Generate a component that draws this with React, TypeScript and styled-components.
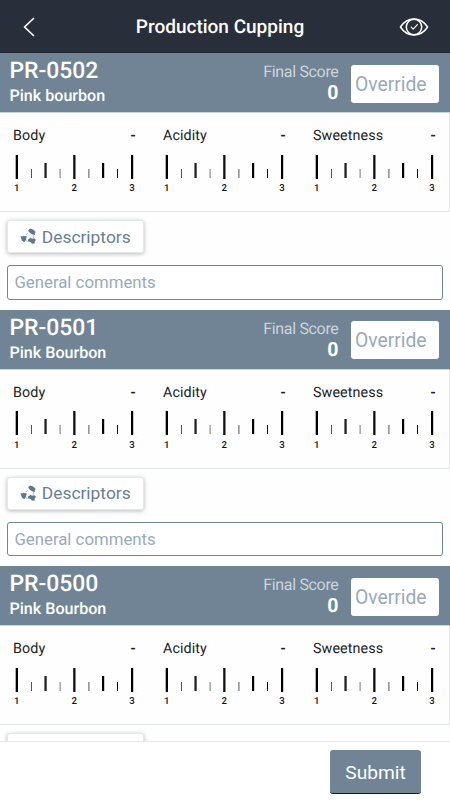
import React from 'react';
import styled, { createGlobalStyle } from 'styled-components';

const GlobalStyle = createGlobalStyle`
  * { box-sizing: border-box; }
  body { margin: 0; background: #fefefe; font-family: Roboto, "Liberation Sans", sans-serif; overflow: hidden; }
  button, input { font-family: inherit; margin: 0; outline: none; }
`;

const Screen = styled.div`
  display: flex;
  flex-direction: column;
  width: 450px;
  height: 800px;
  overflow: hidden;
  text-rendering: geometricPrecision;
`;

const TopBar = styled.header`
  flex: none;
  height: 53px;
  padding: 0 21px 0 23px;
  display: grid;
  grid-template-columns: 18px 1fr 30px;
  align-items: center;
  background: #292e3b;
  border-bottom: 1px solid #202531;
`;

const Title = styled.h1`
  margin: 1px 0 0;
  font-size: 19px;
  line-height: 24px;
  font-weight: 500;
  color: #fff;
  text-align: center;
  white-space: nowrap;
`;

const IconButton = styled.button`
  display: flex;
  margin-top: 1px;
  padding: 0;
  border: 0;
  background: none;
`;

const List = styled.main`
  flex: 1;
  min-height: 0;
  overflow: hidden;
`;

const Sample = styled.section`
  height: 256.6px;
`;

const SampleHeader = styled.div`
  height: 60px;
  display: flex;
  align-items: flex-start;
  padding: 0 11px 0 9.5px;
  background: #708495;
  border-bottom: 1px solid #c9d3da;
  color: #fff;
`;

const Identity = styled.div`
  flex: 1;
  padding-top: 4px;
`;

const Code = styled.div`
  font-size: 22.9px;
  line-height: 27px;
  font-weight: 500;
`;

const Variety = styled.div`
  font-size: 16.1px;
  line-height: 24px;
  font-weight: 500;
`;

const Score = styled.div`
  padding: 9px 12.5px 0 0;
  text-align: right;
`;

const ScoreLabel = styled.div`
  font-size: 16px;
  line-height: 20px;
  letter-spacing: -0.33px;
  color: #ccd5db;
`;

const ScoreValue = styled.div`
  font-size: 19.5px;
  line-height: 21px;
  font-weight: 700;
`;

const Override = styled.input`
  width: 88px;
  height: 38px;
  margin-top: 11.5px;
  padding: 1px 4px 0;
  border: 0;
  border-radius: 3px;
  background: #fff;
  font-size: 19.3px;
  &::placeholder { color: #9aaab8; opacity: 1; }
`;

const Attributes = styled.div`
  height: 99px;
  display: grid;
  grid-template-columns: repeat(3, 150px);
  border-bottom: 1px solid #e1e7e9;
  box-shadow: inset -1px 0 #dfe4ea;
`;

const Attribute = styled.div`
  padding-top: 13px;
`;

const AttributeHead = styled.div`
  display: flex;
  justify-content: space-between;
  padding: 0 14px 0 13px;
  font-size: 14.3px;
  line-height: 20px;
  letter-spacing: 0.1px;
  color: #222;
`;

const Dash = styled.span`
  font-weight: 700;
  letter-spacing: 0;
`;

const Scale = styled.svg`
  display: block;
  margin-top: 8.5px;
`;

const Marks = styled.div`
  display: grid;
  grid-template-columns: repeat(3, 57.6px);
  margin: 4.6px 0 0 -12.1px;
  text-align: center;
  font-size: 9.6px;
  line-height: 12px;
  font-weight: 500;
  color: #111;
`;

const Notes = styled.div`
  display: flex;
  flex-direction: column;
  align-items: flex-start;
  padding: 8px 7.5px 0 7.4px;
  gap: 12px;
`;

const DescriptorsButton = styled.button`
  width: 136.5px;
  height: 33px;
  display: flex;
  align-items: center;
  gap: 5.2px;
  padding: 0 0 0 11.2px;
  border: 1px solid #e3e9eb;
  border-radius: 3px;
  background: #fff;
  box-shadow: 0 1px 4px rgba(0, 0, 0, 0.28);
  color: #667f94;
  font-size: 17.4px;
`;

const Comments = styled.input`
  width: 100%;
  height: 34.6px;
  padding: 0 6px;
  border: 1px solid #708498;
  border-radius: 3px;
  background: #fff;
  font-size: 16.8px;
  &::placeholder { color: #9aaab8; opacity: 1; }
`;

const Footer = styled.footer`
  flex: none;
  height: 59px;
  display: flex;
  justify-content: flex-end;
  padding: 8px 29px 0 0;
  border-top: 1px solid #e5e8ea;
  background: #fff;
`;

const Submit = styled.button`
  width: 91px;
  height: 44px;
  padding: 1px 0 0;
  border: 0;
  border-bottom: 1px solid #0c1930;
  border-radius: 3px;
  background: #708495;
  color: #fff;
  font-size: 19.2px;
`;

const BackIcon = () => (
  <svg width="12" height="20" viewBox="0 0 12 20" fill="none" stroke="#fff" strokeWidth="1.7" strokeLinecap="round" strokeLinejoin="round">
    <path d="M10.5 1.5 1.5 10l9 8.5" />
  </svg>
);

const EyeIcon = () => (
  <svg width="30" height="20" viewBox="0 0 30 20" fill="none" stroke="#fff" strokeWidth="1.5" strokeLinecap="round" strokeLinejoin="round">
    <path d="M1.4 10C4.7 5 9.5 2 15 2s10.300 3 13.600 8C25.300 15 20.500 18 15 18S4.700 15 1.400 10Z" />
    <circle cx="15" cy="10" r="7.700" />
    <path d="m12.200 10.200 2 2 4.200-4.600" strokeWidth="1.200" />
  </svg>
);

const DescriptorIcon = () => (
  <svg width="17" height="17" viewBox="0 0 17 17" fill="#5d778d">
    <path d="m8.200 2.200 1.900-1.700 3 .9 2.700 2.600-1 1 .2 1.900-3.200-.6-2.800-2.200Z" />
    <path d="m.4 8.200 2.300.2 1-.7 1 .5 1.900-.1-.5 3.600-2 2.500-2.200-1.700Z" />
    <path d="m7.600 12.100 3.200-2.600.9 1.300 2.700-.5 1.600 1.600-1.400 1.500v2.100l-2.600.3-1.500-1.700-2.200-.6Z" />
    <path d="M7.700 5.200 5.900 7M13.300 7v3M5.500 12.500l2 1" fill="none" stroke="#9cacb9" strokeWidth=".8" />
  </svg>
);

type Tick = { x: number; w: number; top: number; end: number; color: string };

const ticks: Tick[] = [
  { x: 15.7, w: 2.3, top: 0, end: 24, color: '#000' },
  { x: 31, w: 1, top: 14, end: 23, color: '#555' },
  { x: 44.4, w: 2.3, top: 8, end: 23, color: '#222' },
  { x: 59.6, w: 1, top: 14, end: 23, color: '#777' },
  { x: 73.2, w: 2.3, top: 0, end: 24, color: '#111' },
  { x: 88.4, w: 1, top: 14, end: 23, color: '#555' },
  { x: 102, w: 2.2, top: 8, end: 23, color: '#000' },
  { x: 117, w: 1, top: 14, end: 23, color: '#000' },
  { x: 131, w: 2.2, top: 0, end: 24, color: '#000' },
];

const attributes = ['Body', 'Acidity', 'Sweetness'];

const samples = [
  { code: 'PR-0502', variety: 'Pink bourbon' },
  { code: 'PR-0501', variety: 'Pink Bourbon' },
  { code: 'PR-0500', variety: 'Pink Bourbon' },
];

const Ruler = () => (
  <>
    <Scale width="150" height="24">
      {ticks.map((t) => (
        <rect key={t.x} x={t.x} y={t.top} width={t.w} height={t.end - t.top} fill={t.color} />
      ))}
    </Scale>
    <Marks>
      <span>1</span>
      <span>2</span>
      <span>3</span>
    </Marks>
  </>
);

export default function App() {
  return (
    <Screen>
      <GlobalStyle />
      <TopBar>
        <IconButton aria-label="Back"><BackIcon /></IconButton>
        <Title>Production Cupping</Title>
        <IconButton aria-label="Preview"><EyeIcon /></IconButton>
      </TopBar>
      <List>
        {samples.map((s) => (
          <Sample key={s.code}>
            <SampleHeader>
              <Identity>
                <Code>{s.code}</Code>
                <Variety>{s.variety}</Variety>
              </Identity>
              <Score>
                <ScoreLabel>Final Score</ScoreLabel>
                <ScoreValue>0</ScoreValue>
              </Score>
              <Override placeholder="Override" />
            </SampleHeader>
            <Attributes>
              {attributes.map((name) => (
                <Attribute key={name}>
                  <AttributeHead>
                    <span>{name}</span>
                    <Dash>-</Dash>
                  </AttributeHead>
                  <Ruler />
                </Attribute>
              ))}
            </Attributes>
            <Notes>
              <DescriptorsButton>
                <DescriptorIcon />
                Descriptors
              </DescriptorsButton>
              <Comments placeholder="General comments" />
            </Notes>
          </Sample>
        ))}
      </List>
      <Footer>
        <Submit>Submit</Submit>
      </Footer>
    </Screen>
  );
}
